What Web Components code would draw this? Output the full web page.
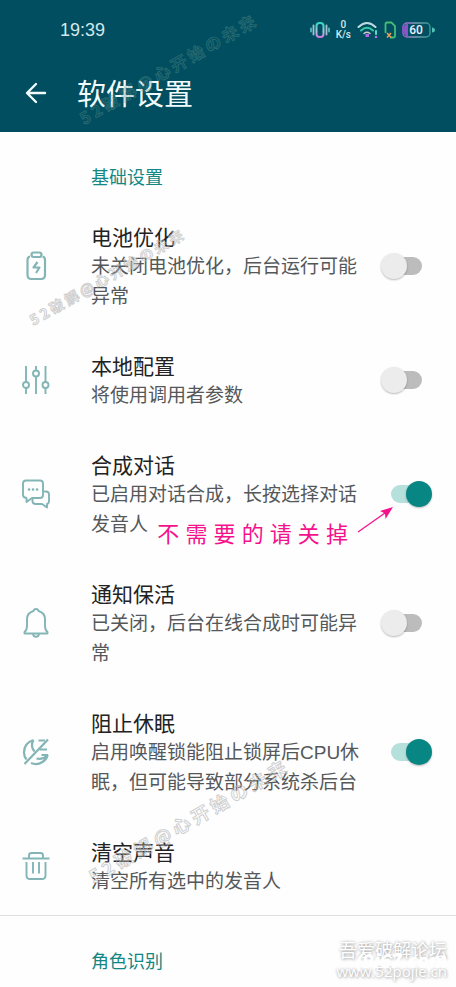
<!DOCTYPE html>
<html lang="zh-CN">
<head>
<meta charset="utf-8">
<meta name="viewport" content="width=device-width, initial-scale=1">
<title>软件设置</title>
<style>
  body { margin: 0; background: #fefefe; font-family: "Liberation Sans", "Noto Sans CJK SC", sans-serif; }
</style>
</head>
<body>
<settings-page></settings-page>

<template id="t-page">
  <style>
    :host { display: block; position: relative; overflow: hidden; min-height: 100vh; }
    header { background: #004e5f; }
  </style>
  <header>
    <status-bar></status-bar>
    <app-bar>软件设置</app-bar>
  </header>
  <main>
    <settings-section heading="基础设置">
      <setting-row icon="battery" heading="电池优化">未关闭电池优化，后台运行可能异常</setting-row>
      <setting-row icon="sliders" heading="本地配置">将使用调用者参数</setting-row>
      <setting-row icon="chat" heading="合成对话" checked>已启用对话合成，长按选择对话发音人<hand-note slot="note">不 需 要 的 请 关 掉</hand-note></setting-row>
      <setting-row icon="bell" heading="通知保活">已关闭，后台在线合成时可能异常</setting-row>
      <setting-row icon="sleep" heading="阻止休眠" checked>启用唤醒锁能阻止锁屏后CPU休眠，但可能导致部分系统杀后台</setting-row>
      <setting-row icon="trash" heading="清空声音" action>清空所有选中的发音人</setting-row>
    </settings-section>
    <settings-section heading="角色识别" divided></settings-section>
  </main>
  <water-mark style="--x:167px;--y:69px;--size:16px;--ink:#5d9390;--fade:.4">5 2 破 解 @ 心 开 始 の 未 来</water-mark>
  <water-mark style="--x:106px;--y:277px;--size:14px">5 2 破 解 @ 心 开 始 の 未 来</water-mark>
  <water-mark style="--x:187px;--y:821px;--size:18px">5 2 破 解 @ 心 开 始 の 未 来</water-mark>
  <site-stamp></site-stamp>
</template>

<template id="t-status">
  <style>
    :host { display: flex; align-items: center; justify-content: space-between; height: 60px; padding: 0 20px 0 60px; color: #d3e8ec; }
    time { font-size: 18px; }
    .tray { display: flex; align-items: center; gap: 6px; }
    svg { display: block; }
    .speed { display: flex; flex-direction: column; align-items: center; font: 500 10px/10px Roboto, sans-serif; }
    .cell { position: relative; }
    .cell b { position: absolute; left: 0; top: 0; width: 28px; text-align: center; font: 500 12px/16px Roboto, sans-serif; color: #eef; }
  </style>
  <time>19:39</time>
  <div class="tray">
    <svg width="20" height="18" viewBox="0 0 20 18" fill="none" stroke-linecap="round">
      <defs><linearGradient id="v" x1="0" y1="0" x2="0" y2="1"><stop offset="0" stop-color="#36d6c0"/><stop offset=".6" stop-color="#a9c7e0"/><stop offset="1" stop-color="#d07be0"/></linearGradient></defs>
      <rect x="6.5" y="2" width="7" height="14" rx="3" stroke="url(#v)" stroke-width="2"/>
      <path d="M3.5 4.5v9M16.5 4.5v9" stroke="#a4c6d2" stroke-width="1.8"/>
      <path d="M1 7.5v3M19 7.5v3" stroke="#58b9bd" stroke-width="1.8"/>
    </svg>
    <div class="speed"><span>0</span><span>K/s</span></div>
    <svg width="21" height="18" viewBox="0 0 21 18" fill="none" stroke-linecap="round" stroke-width="2">
      <path d="M1.5 6Q10 -2 18.5 6" stroke="#bddce2"/>
      <path d="M4 9.5Q10 4 16 9.5" stroke="#36cda6"/>
      <path d="M7 12.5Q10 10 13 12.5" stroke="#c9cfc7" stroke-width="1.5"/>
      <rect x="8.5" y="13" width="3.5" height="3" fill="#b567e6"/>
      <path d="M19 10v3" stroke="#59dbc6"/><circle cx="19" cy="16" r="1.3" fill="#c06be5"/>
    </svg>
    <svg width="12" height="18" viewBox="0 0 12 18" fill="none">
      <path d="M6 16.5h3.500q1.500 0 1.500-1.500V5L7.500 1.500H3Q1.500 1.500 1.500 3v9" stroke="#45bd78" stroke-width="1.8"/>
      <path d="M3 12l4 4.500M7 12l-4 4.500" stroke="#f0a05a" stroke-width="1.5"/>
    </svg>
    <div class="cell">
      <svg width="34" height="16" viewBox="0 0 34 16" fill="none">
        <defs><linearGradient id="c"><stop offset="0" stop-color="#a45bd6"/><stop offset=".45" stop-color="#809bb4"/><stop offset="1" stop-color="#35958f"/></linearGradient></defs>
        <rect x="1" y="1" width="27" height="14" rx="4" stroke="url(#c)" stroke-width="1.5"/>
        <path d="M4 2h2v12H4Q2 13 2 11V5Q2 3 4 2z" fill="#8854c4"/>
        <path d="M30 5.500q3 .5 3 2.500t-3 2.500z" fill="#4cc3b4"/>
      </svg>
      <b>60</b>
    </div>
  </div>
</template>

<template id="t-appbar">
  <style>
    :host { display: flex; align-items: center; gap: 30px; height: 72px; padding: 0 25px 2px; box-sizing: border-box; color: #f2fbfc; }
    button { all: unset; cursor: pointer; }
    svg { display: block; margin-bottom: 4px; }
    h1 { margin: 0; font-size: 29px; line-height: 40px; font-weight: 400; }
  </style>
  <button aria-label="返回"><svg width="22" height="22" viewBox="0 0 22 22" fill="none" stroke="currentColor" stroke-width="2.4" stroke-linecap="round" stroke-linejoin="round"><path d="M20 11H2.500M11 2L2 11l9 9"/></svg></button>
  <h1><slot></slot></h1>
</template>

<template id="t-section">
  <style>
    :host { display: block; }
    :host([divided]) { border-top: 1px solid #dedede; }
    h2 { margin: 0; padding: 32px 24px 11px 91px; font-size: 18px; line-height: 28px; font-weight: 400; color: #128783; }
    .rows { display: flex; flex-direction: column; gap: 4px; padding-bottom: 2px; }
    :host([divided]) .rows { padding: 0; }
  </style>
  <h2></h2>
  <div class="rows"><slot></slot></div>
</template>

<template id="t-row">
  <style>
    :host { display: block; position: relative; }
    .row { all: unset; box-sizing: border-box; width: 100%; display: flex; align-items: center; padding: 16px 24px 16px 22px; cursor: pointer; }
    line-icon { margin-right: 41px; }
    .text { flex: 1; min-width: 0; display: flex; flex-direction: column; margin-right: 16px; padding-top: 5px; }
    .name { font-size: 21px; line-height: 28px; color: #222; }
    .desc { font-size: 19px; line-height: 30px; color: #55585a; }
  </style>
  <slot name="note"></slot>
</template>

<template id="t-switch">
  <style>
    :host { display: block; flex: none; }
    input { appearance: none; display: grid; align-items: center; width: 51px; height: 28px; margin: 0; background: none; cursor: pointer; }
    input::before, input::after { content: ""; grid-area: 1 / 1; }
    input::before { height: 18px; margin: 0 10px; border-radius: 9px; background: #bcbcbc; }
    input::after { width: 26px; height: 26px; border-radius: 50%; background: #ececec; box-shadow: 0 1px 2px #0004; }
    input:checked::before { background: #b5e0dc; }
    input:checked::after { justify-self: end; background: #078683; }
  </style>
  <input type="checkbox" role="switch">
</template>

<script>
const clone = (el, id) => {
  const root = el.attachShadow({ mode: "open" });
  root.append(document.getElementById(id).content.cloneNode(true));
  return root;
};
const simple = (name, id) => customElements.define(name, class extends HTMLElement {
  constructor() { super(); clone(this, id); }
});

const ICONS = {
  battery: '<path d="M8 5.500Q5.500 6 5.500 9v15q0 4 4 4h9.500q4 0 4-4V9q0-3-2.500-3.500" stroke-width="2.2"/><rect x="9.500" y="1.500" width="10" height="4.500" rx="2.200" stroke-width="2.2"/><path d="M15.500 11l-4 5.500h6L14 22" stroke-width="2.2"/>',
  sliders: '<path d="M4 1v16M4 22.500V29M14 1v5M14 11.500V29M23.500 1v16M23.500 22.500V29"/><circle cx="4" cy="20" r="3"/><circle cx="14" cy="8.500" r="3"/><circle cx="23.500" cy="20" r="3"/>',
  chat: '<path d="M4 1.500h14q3 0 3 3v11.500q0 3-3 3H10l-5.500 4V19Q1 18.500 1 16V4.500q0-3 3-3z"/><path d="M21.500 12.500H24q3 0 3 3V22q0 2.500-2 3v3.500L20 25h-6.500q-2.500 0-3-2.500V20"/><path d="M7 10.500h.1M11 10.500h.1M15 10.500h.1" stroke-width="2.600" stroke-linecap="round"/>',
  bell: '<path d="M2.500 25.500V24q2.500-2 2.500-6v-7Q5 5 11.500 3q.5-2 2.500-2t2.500 2Q23 5 23 11v7q0 4 2.500 6v1.500z"/><path d="M11 26q.5 2.800 3 2.800t3-2.800"/>',
  sleep: '<path d="M11.500 3Q2 6 2 15.500q0 4 2.500 7M11.500 3Q8 9.500 12.500 14.500M26 2.500L2.500 27" stroke-width="2.200"/><path d="M16.500 3.500H23M17.500 12.500H25M19.500 18H26M9 26q6 2.500 11.500-1 4-2.500 5-6.500-5 4.500-11 3" stroke-width="2.200"/>',
  trash: '<path d="M.5 7.500h27M7 7V4.500Q7 2 9.500 2h9Q21 2 21 4.500V7M4.500 11v13.500q0 3.500 3.500 3.500h12q3.500 0 3.500-3.500V11M11 11v11.500M17 11v11.500"/>'
};
customElements.define("line-icon", class extends HTMLElement {
  connectedCallback() {
    if (this.shadowRoot) return;
    this.attachShadow({ mode: "open" }).innerHTML =
      `<style>:host{display:block;flex:none}svg{display:block}</style>
       <svg width="28" height="30" viewBox="0 0 28 30" fill="none" stroke="#83b5b6" stroke-width="1.900" stroke-linejoin="round" aria-hidden="true">${ICONS[this.getAttribute("name")]}</svg>`;
  }
});

customElements.define("toggle-switch", class extends HTMLElement {
  connectedCallback() {
    if (this.shadowRoot) return;
    const input = clone(this, "t-switch").querySelector("input");
    input.checked = this.hasAttribute("checked");
    input.setAttribute("aria-label", this.getAttribute("label"));
    this.input = input;
  }
});

customElements.define("setting-row", class extends HTMLElement {
  connectedCallback() {
    if (this.shadowRoot) return;
    const root = clone(this, "t-row");
    const name = this.getAttribute("heading");
    const action = this.hasAttribute("action");
    const row = document.createElement(action ? "button" : "div");
    row.className = "row";
    row.innerHTML = `<line-icon name="${this.getAttribute("icon")}"></line-icon>
      <span class="text"><span class="name">${name}</span><span class="desc"><slot></slot></span></span>` +
      (action ? "" : `<toggle-switch label="${name}" ${this.hasAttribute("checked") ? "checked" : ""}></toggle-switch>`);
    root.insertBefore(row, root.querySelector("slot[name=note]"));
    if (!action) row.querySelector(".text").addEventListener("click", () => row.querySelector("toggle-switch").input.click());
  }
});

customElements.define("settings-section", class extends HTMLElement {
  connectedCallback() {
    if (this.shadowRoot) return;
    clone(this, "t-section").querySelector("h2").textContent = this.getAttribute("heading");
  }
});

customElements.define("hand-note", class extends HTMLElement {
  constructor() {
    super();
    this.attachShadow({ mode: "open" }).innerHTML = `
      <style>
        :host { position: absolute; right: 62px; bottom: 7px; display: flex; align-items: flex-end; gap: 9px; pointer-events: none; color: #f5118c; }
        span { font-size: 22px; line-height: 28px; white-space: nowrap; }
        svg { display: block; margin-bottom: 16px; }
      </style>
      <span><slot></slot></span>
      <svg width="37" height="27" viewBox="0 0 37 27"><path d="M1 26L28 7" stroke="currentColor" stroke-width="1.3"/><path d="M36 1L23 5l5 2.500.500 5.500z" fill="currentColor"/></svg>`;
  }
});

customElements.define("water-mark", class extends HTMLElement {
  constructor() {
    super();
    this.attachShadow({ mode: "open" }).innerHTML = `
      <style>
        :host { position: absolute; left: var(--x); top: var(--y); transform: translate(-50%, -50%) rotate(-30deg);
          font: 700 var(--size)/1 "Noto Sans CJK SC", sans-serif; white-space: nowrap; pointer-events: none;
          color: #fff0; -webkit-text-stroke: 1px var(--ink, #b8b8b8); opacity: var(--fade, .65); }
      </style><slot></slot>`;
  }
});

customElements.define("site-stamp", class extends HTMLElement {
  constructor() {
    super();
    this.attachShadow({ mode: "open" }).innerHTML = `
      <style>
        :host { position: absolute; right: 9px; bottom: 6px; display: grid; justify-items: end; color: #fff; pointer-events: none;
          text-shadow: 0 0 3px #aaa, 1px 1px 3px #bbb; }
        .forum { font-size: 18px; line-height: 20px; }
        .url { font: 15px/20px "Open Sans", sans-serif; }
        .host { position: absolute; right: 0; top: 9px; font: italic 700 20px/22px "Open Sans", sans-serif; text-shadow: none; }
      </style>
      <span class="host">(9i67.com</span><span class="forum">吾爱破解论坛</span><span class="url">www.52pojie.cn</span>`;
  }
});

simple("status-bar", "t-status");
simple("app-bar", "t-appbar");
simple("settings-page", "t-page");
</script>
</body>
</html>
